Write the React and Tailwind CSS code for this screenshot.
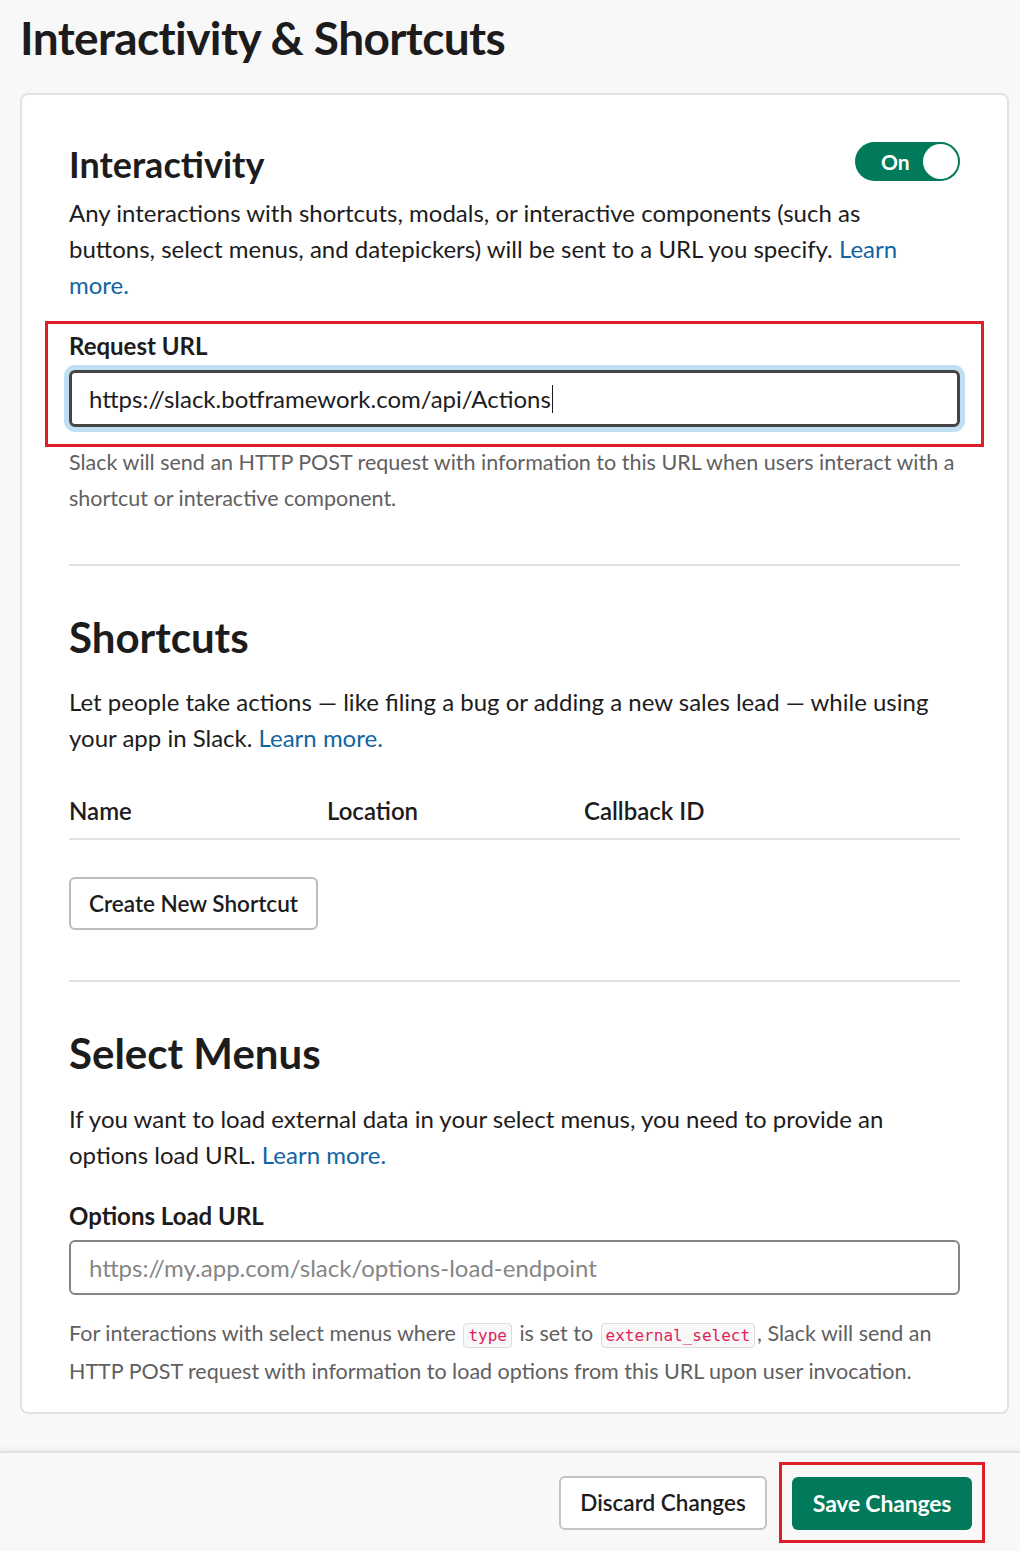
import React from "react";

const font = { fontFamily: "Lato, 'Noto Sans', sans-serif" };

function Toggle() {
  return (
    <div className="flex h-[39px] w-[105px] shrink-0 items-center justify-between rounded-full bg-[#007a5a] pl-[26px] pr-[2px]">
      <span className="text-[21px] font-bold leading-none text-white">On</span>
      <span className="h-[35px] w-[35px] rounded-full bg-white" />
    </div>
  );
}

function Code({ children }) {
  return (
    <code className="mx-[2px] rounded-[4px] border border-[#dddddd] bg-[#f8f8f8] px-[4px] py-[2px] font-['DejaVu_Sans_Mono',_'Liberation_Mono',_monospace] text-[16px] leading-none text-[#e01e5a]">
      {children}
    </code>
  );
}

export default function App() {
  return (
    <div style={font} className="min-h-[1551px] bg-[#f8f8f8] text-[#1d1c1d]">
      <div className="pl-[20px] pr-[11px] pt-[10px]">
        <h1 className="text-[46px] font-bold leading-[56px] tracking-[-0.6px]">Interactivity &amp; Shortcuts</h1>
        <div className="mt-[27px] rounded-[8px] border-2 border-[#e2e2e2] bg-white px-[47px] pb-[22px] pt-[47px]">
          <div className="flex items-start justify-between">
            <h2 className="text-[36px] font-bold leading-[44px]">Interactivity</h2>
            <Toggle />
          </div>
          <p className="mt-[9px] max-w-[850px] text-[24px] leading-[36px]">
            Any interactions with shortcuts, modals, or interactive components (such as buttons, select menus, and datepickers) will be sent to a URL you specify.{" "}
            <span className="text-[#1264a3]">Learn more.</span>
          </p>

          <div className="-mx-[24px] mt-[18px] border-[3px] border-[#e01e28] px-[21px] pb-[17px] pt-[8px]">
            <div className="text-[24px] font-bold leading-[28px]">Request URL</div>
            <div className="mt-[10px] rounded-[6px] shadow-[0_0_0_5px_#bfe0f2]">
              <div className="flex h-[57px] items-center rounded-[6px] border-[3px] border-[#454545] pl-[17px] text-[24px]">
                <span>https://slack.botframework.com/api/Actions</span>
                <span className="ml-[1px] h-[28px] w-[1px] bg-[#1d1c1d]" />
              </div>
            </div>
          </div>

          <p className="-mt-[3px] text-[21.5px] leading-[36px] text-[#616061]">
            Slack will send an HTTP POST request with information to this URL when users interact with a shortcut or interactive component.
          </p>

          <div className="mt-[48px] h-[2px] bg-[#e2e2e2]" />

          <h2 className="mt-[45px] text-[42px] font-bold leading-[52px]">Shortcuts</h2>
          <p className="mt-[21px] text-[24px] leading-[36px]">
            Let people take actions — like filing a bug or adding a new sales lead — while using your app in Slack.{" "}
            <span className="text-[#1264a3]">Learn more.</span>
          </p>
          <div className="mt-[41px] grid grid-cols-[258px_257px_1fr] border-b-2 border-[#e2e2e2] pb-[13px] text-[24px] font-semibold leading-[28px]">
            <div>Name</div>
            <div>Location</div>
            <div>Callback ID</div>
          </div>
          <button className="mt-[37px] flex h-[53px] w-[249px] items-center justify-center rounded-[6px] border-2 border-[#bcbcbc] bg-white text-[22.5px] font-semibold">
            Create New Shortcut
          </button>

          <div className="mt-[50px] h-[2px] bg-[#e2e2e2]" />

          <h2 className="mt-[45px] text-[42px] font-bold leading-[52px]">Select Menus</h2>
          <p className="mt-[22px] text-[24px] leading-[36px]">
            If you want to load external data in your select menus, you need to provide an options load URL.{" "}
            <span className="text-[#1264a3]">Learn more.</span>
          </p>
          <div className="mt-[29px] text-[24px] font-bold leading-[28px]">Options Load URL</div>
          <div className="mt-[10px] flex h-[55px] items-center rounded-[6px] border-2 border-[#868686] pl-[18px] text-[24px] text-[#868686]">
            https://my.app.com/slack/options-load-endpoint
          </div>
          <p className="mt-[19px] text-[21.5px] leading-[38px] text-[#616061]">
            For interactions with select menus where <Code>type</Code> is set to <Code>external_select</Code>, Slack will send an HTTP POST request with information to load options from this URL upon user invocation.
          </p>
        </div>
      </div>

      <div className="mt-[37px] flex items-center justify-end border-t-2 border-[#e2e2e2] bg-[#f8f8f8] pb-[9px] pr-[35px] pt-[9px] shadow-[0_-3px_4px_rgba(0,0,0,0.04)]">
        <button className="flex h-[54px] w-[208px] items-center justify-center rounded-[6px] border-2 border-[#c4c4c4] bg-white text-[22.5px] font-semibold">
          Discard Changes
        </button>
        <div className="ml-[12px] border-[3px] border-[#e01e28] px-[10px] pb-[10px] pt-[12px]">
          <button className="flex h-[53px] w-[180px] items-center justify-center rounded-[6px] bg-[#007a5a] text-[23px] font-bold tracking-[-0.2px] text-white">
            Save Changes
          </button>
        </div>
      </div>
    </div>
  );
}
